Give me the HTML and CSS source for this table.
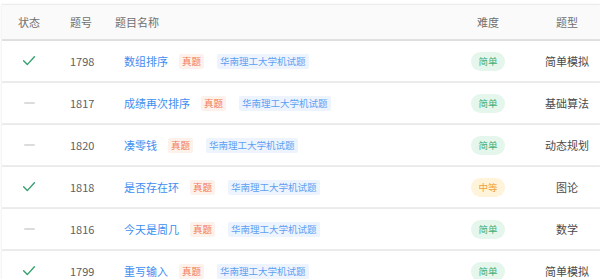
FILE: index.html
```html
<!DOCTYPE html>
<html lang="zh-CN">
<head>
<meta charset="utf-8">
<title>题目列表</title>
<link rel="stylesheet" href="styles.css">
</head>
<body>
<div class="list">
  <div class="row head">
    <div class="c-status">状态</div>
    <div class="c-id">题号</div>
    <div class="c-title">题目名称</div>
    <div class="c-diff">难度</div>
    <div class="c-type">题型</div>
  </div>

  <div class="row">
    <div class="c-status"><svg class="check" viewBox="0 0 12 10" width="12" height="10"><path d="M0.6 4.8 L4.3 8.6 L11.4 0.8"/></svg></div>
    <div class="c-id">1798</div>
    <div class="c-title"><span class="name">数组排序</span><span class="tag real">真题</span><span class="tag school">华南理工大学机试题</span></div>
    <div class="c-diff"><span class="diff easy">简单</span></div>
    <div class="c-type">简单模拟</div>
  </div>

  <div class="row">
    <div class="c-status"><span class="dash"></span></div>
    <div class="c-id">1817</div>
    <div class="c-title"><span class="name">成绩再次排序</span><span class="tag real">真题</span><span class="tag school">华南理工大学机试题</span></div>
    <div class="c-diff"><span class="diff easy">简单</span></div>
    <div class="c-type">基础算法</div>
  </div>

  <div class="row">
    <div class="c-status"><span class="dash"></span></div>
    <div class="c-id">1820</div>
    <div class="c-title"><span class="name">凑零钱</span><span class="tag real">真题</span><span class="tag school">华南理工大学机试题</span></div>
    <div class="c-diff"><span class="diff easy">简单</span></div>
    <div class="c-type">动态规划</div>
  </div>

  <div class="row">
    <div class="c-status"><svg class="check" viewBox="0 0 12 10" width="12" height="10"><path d="M0.6 4.8 L4.3 8.6 L11.4 0.8"/></svg></div>
    <div class="c-id">1818</div>
    <div class="c-title"><span class="name">是否存在环</span><span class="tag real">真题</span><span class="tag school">华南理工大学机试题</span></div>
    <div class="c-diff"><span class="diff medium">中等</span></div>
    <div class="c-type">图论</div>
  </div>

  <div class="row">
    <div class="c-status"><span class="dash"></span></div>
    <div class="c-id">1816</div>
    <div class="c-title"><span class="name">今天是周几</span><span class="tag real">真题</span><span class="tag school">华南理工大学机试题</span></div>
    <div class="c-diff"><span class="diff easy">简单</span></div>
    <div class="c-type">数学</div>
  </div>

  <div class="row">
    <div class="c-status"><svg class="check" viewBox="0 0 12 10" width="12" height="10"><path d="M0.6 4.8 L4.3 8.6 L11.4 0.8"/></svg></div>
    <div class="c-id">1799</div>
    <div class="c-title"><span class="name">重写输入</span><span class="tag real">真题</span><span class="tag school">华南理工大学机试题</span></div>
    <div class="c-diff"><span class="diff easy">简单</span></div>
    <div class="c-type">简单模拟</div>
  </div>
</div>
</body>
</html>
```

FILE: styles.css
```css
html, body {
  margin: 0;
  padding: 0;
  background: #ffffff;
}
body {
  font-family: "Noto Sans CJK SC", "Noto Sans", sans-serif;
  font-size: 11px;
  color: #606060;
  overflow: hidden;
}
.list {
  margin: 4px 0 0 2px;
}
.row {
  display: grid;
  grid-template-columns: 54px 57px 1fr 92px 66px;
  align-items: center;
  height: 40px;
  border-bottom: 2px solid #eeeeee;
  background: #fff;
  box-shadow: -1px 0 2px rgba(0, 0, 0, 0.06);
}
.row.head {
  height: 34px;
  background: #fafafa;
  border-top: 1px solid #ececec;
  border-bottom: 2px solid #e2e2e2;
  color: #707070;
}
.c-status {
  display: flex;
  justify-content: center;
  align-items: center;
}
.c-id {
  padding-left: 14px;
}
.row.head .c-title {
  padding-left: 2px;
}
.c-title {
  padding-left: 11px;
  display: flex;
  align-items: center;
  white-space: nowrap;
}
.c-diff, .c-type {
  text-align: center;
}
.c-type {
  color: #4a4a4a;
}
.row.head .c-type {
  color: #707070;
}
.check {
  display: block;
  fill: none;
  stroke: #36a170;
  stroke-width: 1.4;
  stroke-linecap: round;
  stroke-linejoin: round;
}
.dash {
  display: block;
  width: 11px;
  height: 2px;
  background: #dcdcdc;
  border-radius: 1px;
}
.name {
  color: #3d8ef0;
}
.tag {
  font-size: 9.5px;
  line-height: 15px;
  padding: 0 3px;
  border-radius: 2px;
}
.tag.real {
  margin-left: 11px;
  color: #f27a55;
  background: #fdf1ec;
}
.tag.school {
  margin-left: 13px;
  color: #5da0f2;
  background: #edf4fe;
}
.diff {
  display: inline-block;
  font-size: 9.5px;
  line-height: 19px;
  padding: 0 7px;
  border-radius: 10px;
}
.diff.easy {
  color: #3fae78;
  background: #e5f6ec;
}
.diff.medium {
  color: #f0a13a;
  background: #fff3d9;
}
```
